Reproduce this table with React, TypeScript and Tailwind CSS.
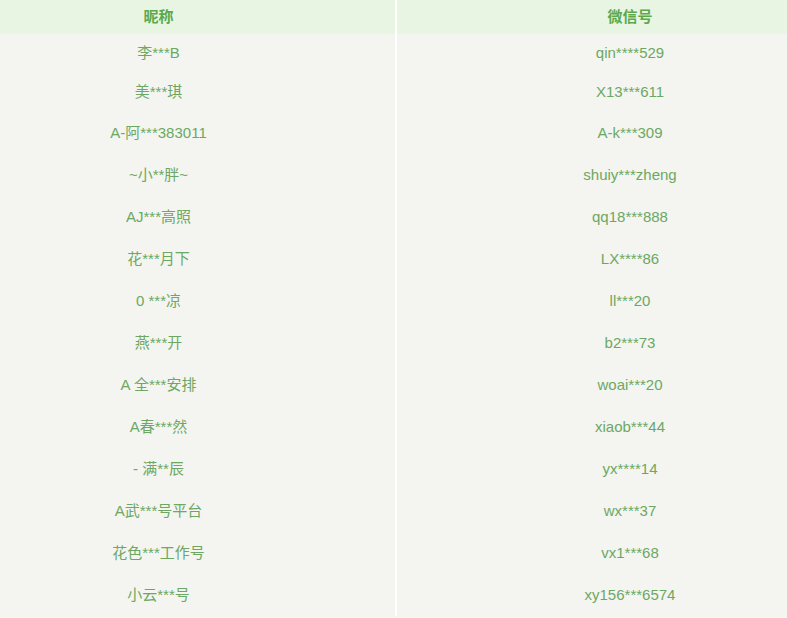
const ROWS: [string, string][] = [
  ['李***B', 'qin****529'],
  ['美***琪', 'X13***611'],
  ['A-阿***383011', 'A-k***309'],
  ['~小**胖~', 'shuiy***zheng'],
  ['AJ***高照', 'qq18***888'],
  ['花***月下', 'LX****86'],
  ['0 ***凉', 'll***20'],
  ['燕***开', 'b2***73'],
  ['A 全***安排', 'woai***20'],
  ['A春***然', 'xiaob***44'],
  ['- 满**辰', 'yx****14'],
  ['A武***号平台', 'wx***37'],
  ['花色***工作号', 'vx1***68'],
  ['小云***号', 'xy156***6574'],
];

const FONT = "font-['Liberation_Sans','Noto_Sans_CJK_SC',sans-serif]";

function rowHeight(i: number) {
  if (i === 0) return 'h-[39px]';
  if (i === 1) return 'h-[39px]';
  return 'h-[42px]';
}

export default function App() {
  return (
    <div className={`w-[787px] h-[618px] overflow-hidden bg-[#f4f5f1] ${FONT}`}>
      <div className="flex h-[34px] bg-[#e8f5e2] text-[15px] font-bold text-[#5ca94c]">
        <div className="w-[395px] flex items-center justify-center pr-[78px]">昵称</div>
        <div className="w-[2px] bg-white" />
        <div className="flex-1 flex items-center justify-center pl-[76px]">微信号</div>
      </div>
      <div className="text-[15px] text-[#6ca862]">
        {ROWS.map(([name, wx], i) => (
          <div key={i} className={`flex ${rowHeight(i)}`}>
            <div className="w-[395px] flex items-center justify-center pr-[78px]">{name}</div>
            <div className="w-[2px] bg-white" />
            <div className="flex-1 flex items-center justify-center pl-[76px]">{wx}</div>
          </div>
        ))}
      </div>
    </div>
  );
}
